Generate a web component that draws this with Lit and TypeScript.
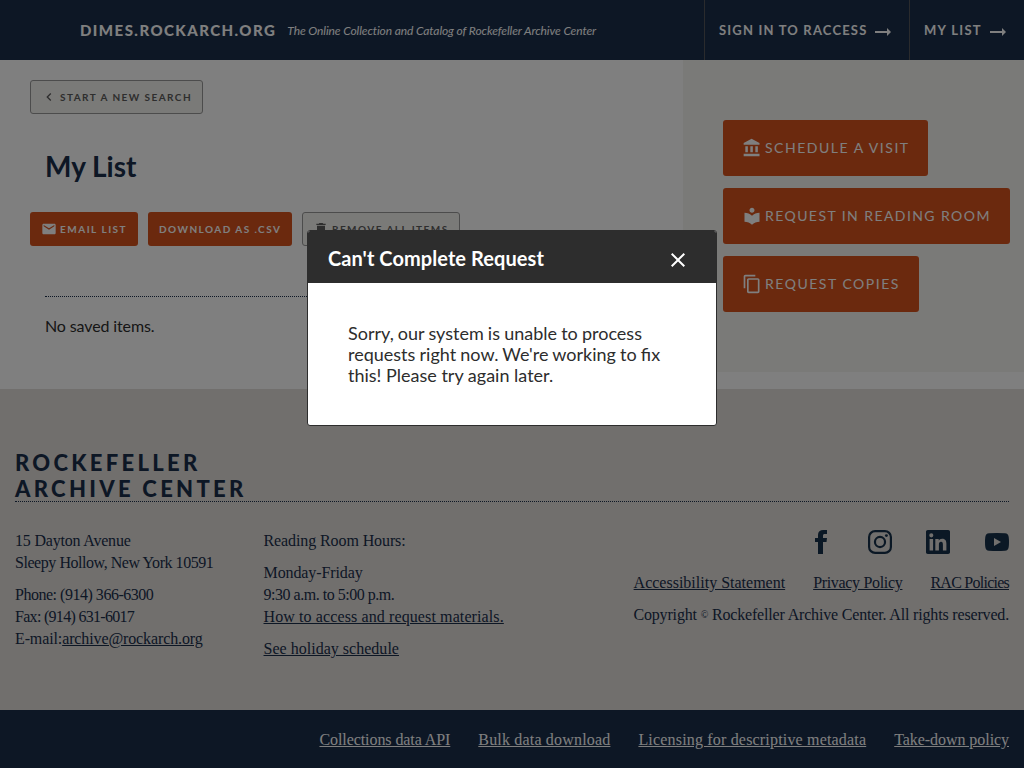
import { LitElement, html, css, svg } from "lit";
import { customElement } from "lit/decorators.js";

const icon = (cls: string, viewBox: string, d: string) =>
  html`<svg class=${cls} viewBox=${viewBox} fill="currentColor" aria-hidden="true">${svg`<path fill-rule="evenodd" d=${d}></path>`}</svg>`;

const ARROW = "M0 4h12V1l4 4-4 4V6H0z";
const CHEVRON = "M15.41 7.41L14 6l-6 6 6 6 1.41-1.41L10.83 12z";
const MAIL = "M20 4H4c-1.1 0-1.99.9-1.99 2L2 18c0 1.1.9 2 2 2h16c1.1 0 2-.9 2-2V6c0-1.1-.9-2-2-2zm0 4l-8 5-8-5V6l8 5 8-5v2z";
const TRASH = "M6 19c0 1.1.9 2 2 2h8c1.1 0 2-.9 2-2V7H6v12zM19 4h-3.500l-1-1h-5l-1 1H5v2h14V4z";
const BANK = "M4 10v7h3v-7H4zm6 0v7h3v-7h-3zM2 22h19v-3H2v3zm14-12v7h3v-7h-3zm-4.500-9L2 6v2h19V6l-9.500-5z";
const READER = "M12 11.550C9.640 9.350 6.480 8 3 8v11c3.480 0 6.640 1.350 9 3.550 2.360-2.190 5.520-3.550 9-3.550V8c-3.480 0-6.640 1.350-9 3.550zM12 8c1.660 0 3-1.340 3-3s-1.340-3-3-3-3 1.340-3 3 1.340 3 3 3z";
const COPY = "M16 1H4c-1.100 0-2 .9-2 2v14h2V3h12V1zm3 4H8c-1.100 0-2 .9-2 2v14c0 1.100.9 2 2 2h11c1.100 0 2-.9 2-2V7c0-1.100-.9-2-2-2zm0 16H8V7h11v14z";
const CLOSE = "M19 6.410L17.590 5 12 10.590 6.410 5 5 6.410 10.590 12 5 17.590 6.410 19 12 13.410 17.590 19 19 17.590 13.410 12z";
const FACEBOOK = "M3 24V12H0V8h3V5C3 1.700 5 0 8.300 0H12v4H9.800C8.500 4 8 4.600 8 5.700V8h4l-.5 4H8v12z";
const LINKEDIN = "M1.800 0h20.400C23.200 0 24 .8 24 1.700v20.600c0 .9-.8 1.700-1.800 1.700H1.800C.8 24 0 23.200 0 22.300V1.700C0 .8.800 0 1.800 0zM3.600 9v11.400h3.500V9zM5.300 3.300a2.050 2.050 0 1 0 0 4.100 2.050 2.050 0 0 0 0-4.100zM9.300 9v11.400h3.600v-5.700c0-1.500.3-2.900 2.100-2.900 1.800 0 1.900 1.700 1.900 3v5.600h3.500v-6.300c0-3.100-.7-5.400-4.300-5.400-1.700 0-2.900.9-3.300 1.800h-.1V9z";
const YOUTUBE = "M4 3.300Q12 2.700 20 3.300Q23.300 3.500 23.700 7Q24.300 12 23.700 17Q23.300 20.500 20 20.700Q12 21.300 4 20.700Q.7 20.500.3 17Q-.3 12 .3 7Q.7 3.500 4 3.300zM9 7.900v8.200l7-4.100z";

@customElement("app-root")
export class AppRoot extends LitElement {
  static styles = css`
    :host { display: block; position: relative; width: 1024px; height: 768px; overflow: hidden; background: #fff; color: #2d2d2d; font-family: Lato, sans-serif; }
    * { box-sizing: border-box; }
    p, h1, h2 { margin: 0; }
    a { color: inherit; }
    svg { display: block; flex: none; }
    .page { display: flex; flex-direction: column; height: 768px; }
    .header { display: flex; height: 60px; flex: none; background: #1a2e4b; color: #fff; white-space: nowrap; }
    .brand { display: flex; align-items: center; flex: 1; padding-left: 80px; gap: 11px; }
    .site { font-size: 15px; font-weight: 900; letter-spacing: 1.45px; line-height: 20px; }
    .tagline { font-size: 12px; font-style: italic; line-height: 20px; padding-top: 2px; letter-spacing: -.095px; }
    .nav { display: flex; align-items: center; gap: 8px; padding: 0 0 0 14px; border-left: 1px solid #55565a; font-size: 13px; font-weight: 700; letter-spacing: 1.3px; }
    .signin { width: 205px; letter-spacing: 1.18px; }
    .mylist { width: 115px; }
    .arrow { width: 16px; height: 10px; margin-top: 4px; }
    .body { display: flex; height: 329px; flex: none; }
    .main { flex: 1; padding: 20px 0 0 30px; }
    .btn { display: inline-flex; align-items: center; height: 34px; border-radius: 3px; font-size: 10px; font-weight: 700; letter-spacing: 1.45px; white-space: nowrap; }
    .light { background: #f5f4f0; border: 1px solid #999; color: #5c5c5c; }
    .orange { background: #d7521d; color: #fff; }
    .back { width: 173px; padding-left: 10px; }
    .title { margin: 33px 0 0 15px; font-size: 28px; line-height: 38px; font-weight: 700; color: #1a2e4b; }
    .actions { display: flex; gap: 10px; margin-top: 27px; }
    .email { width: 108px; padding-left: 11px; letter-spacing: 1.5px; }
    .csv { width: 144px; padding-left: 11px; }
    .remove { width: 158px; padding-left: 10px; }
    .small { width: 16px; height: 16px; margin-right: 3px; }
    .list { margin: 50px 0 0 15px; border-top: 1px dotted #1a2e4b; padding-top: 19px; font-size: 16px; line-height: 20px; letter-spacing: -.12px; }
    .aside { display: flex; flex-direction: column; align-items: flex-start; gap: 12px; width: 341px; height: 312px; padding: 60px 0 0 40px; background: #f5f4f0; }
    .big { display: flex; align-items: center; height: 56px; padding-left: 19px; border-radius: 3px; font-size: 14px; letter-spacing: 1.52px; white-space: nowrap; }
    .label { padding-bottom: 2px; }
    .visit { width: 205px; } .room { width: 287px; letter-spacing: 1.43px; } .copies { width: 196px; }
    .medium { width: 20px; height: 20px; margin-right: 3px; }
    .footer { flex: none; height: 321px; padding: 61px 15px 0; background: #e2dfdb; color: #1a2e4b; }
    .logo { height: 52px; border-bottom: 1px dotted #1a2e4b; font-size: 22px; font-weight: 900; line-height: 26px; letter-spacing: 3.3px; }
    .cols { display: flex; padding-top: 28px; font-family: "Liberation Serif", serif; font-size: 16px; line-height: 22px; white-space: nowrap; }
    .address { width: 248.500px; letter-spacing: -.2px; }
    .city { letter-spacing: -.45px; }
    .phone { letter-spacing: -.48px; }
    .fax { letter-spacing: -.7px; }
    .mail { letter-spacing: -.12px; }
    .hours { width: 300px; letter-spacing: -.1px; }
    .times { letter-spacing: -.48px; }
    .access { letter-spacing: .11px; }
    .holiday { letter-spacing: .02px; }
    .gap { margin-top: 10px; }
    .right { display: flex; flex-direction: column; align-items: flex-end; margin-left: auto; }
    .social { display: flex; align-items: center; height: 24px; color: #16304a; }
    .fb { width: 12px; height: 24px; margin-right: 41px; }
    .ig { width: 24px; height: 24px; margin-right: 34px; }
    .li { width: 24px; height: 24px; margin-right: 35px; }
    .yt { width: 24px; height: 24px; }
    .policies { display: flex; gap: 28px; margin-top: 18px; }
    .p2 { letter-spacing: -.32px; }
    .p3 { letter-spacing: -.75px; }
    .copyright { letter-spacing: -.17px; }
    .mark { font-size: 10px; line-height: 1; vertical-align: 2px; }
    .bottom { display: flex; justify-content: flex-end; gap: 28px; height: 58px; flex: none; padding: 19px 15px 0; background: #1a2e4b; color: #fff; font-family: "Liberation Serif", serif; font-size: 16px; line-height: 22px; white-space: nowrap; }
    .b1 { letter-spacing: -.08px; }
    .b2 { letter-spacing: .18px; }
    .b3 { letter-spacing: .18px; }
    .b4 { letter-spacing: -.06px; }
    .overlay { position: absolute; inset: 0; display: flex; justify-content: center; align-items: flex-start; padding-top: 230px; background: rgba(0,0,0,.5); }
    .modal { width: 410px; height: 196px; border: 1px solid #2d2d2d; border-radius: 3px; background: #fff; overflow: hidden; }
    .modal-head { display: flex; align-items: center; justify-content: space-between; height: 52px; padding: 0 26px 0 20px; background: #2d2d2d; color: #fff; }
    .modal-title { font-size: 20px; font-weight: 700; line-height: 24px; padding-top: 2px; letter-spacing: .07px; }
    .close { width: 24px; height: 24px; margin-top: 6px; }
    .modal-body { padding: 40px; font-size: 18px; line-height: 21px; white-space: nowrap; word-spacing: -.45px; }
    .last { word-spacing: 0; }
  `;

  render() {
    return html`
      <div class="page">
        <header class="header">
          <div class="brand"><span class="site">DIMES.ROCKARCH.ORG</span><span class="tagline">The Online Collection and Catalog of Rockefeller Archive Center</span></div>
          <div class="nav signin"><span>SIGN IN TO RACCESS</span>${icon("arrow", "0 0 16 10", ARROW)}</div>
          <div class="nav mylist"><span>MY LIST</span>${icon("arrow", "0 0 16 10", ARROW)}</div>
        </header>
        <div class="body">
          <main class="main">
            <div class="btn light back">${icon("small", "0 0 24 24", CHEVRON)}START A NEW SEARCH</div>
            <h1 class="title">My List</h1>
            <div class="actions">
              <div class="btn orange email">${icon("small", "0 0 24 24", MAIL)}EMAIL LIST</div>
              <div class="btn orange csv">DOWNLOAD AS .CSV</div>
              <div class="btn light remove">${icon("small", "0 0 24 24", TRASH)}REMOVE ALL ITEMS</div>
            </div>
            <div class="list">No saved items.</div>
          </main>
          <aside class="aside">
            <div class="big orange visit">${icon("medium", "0 0 24 24", BANK)}<span class="label">SCHEDULE A VISIT</span></div>
            <div class="big orange room">${icon("medium", "0 0 24 24", READER)}<span class="label">REQUEST IN READING ROOM</span></div>
            <div class="big orange copies">${icon("medium", "0 0 24 24", COPY)}<span class="label">REQUEST COPIES</span></div>
          </aside>
        </div>
        <footer class="footer">
          <div class="logo">ROCKEFELLER<br>ARCHIVE CENTER</div>
          <div class="cols">
            <div class="address">
              <p>15 Dayton Avenue</p>
              <p class="city">Sleepy Hollow, New York 10591</p>
              <p class="gap phone">Phone: (914) 366-6300</p>
              <p class="fax">Fax: (914) 631-6017</p>
              <p class="mail">E-mail:<a href="#">archive@rockarch.org</a></p>
            </div>
            <div class="hours">
              <p>Reading Room Hours:</p>
              <p class="gap">Monday-Friday</p>
              <p class="times">9:30 a.m. to 5:00 p.m.</p>
              <p class="access"><a href="#">How to access and request materials.</a></p>
              <p class="gap holiday"><a href="#">See holiday schedule</a></p>
            </div>
            <div class="right">
              <div class="social">
                ${icon("fb", "0 0 12 24", FACEBOOK)}
                <svg class="ig" viewBox="0 0 24 24" fill="none" stroke="currentColor" stroke-width="2.200"><rect x="1.100" y="1.100" width="21.800" height="21.800" rx="6"></rect><circle cx="12" cy="12" r="5.050"></circle><circle cx="18.400" cy="5.600" r="1.450" fill="currentColor" stroke="none"></circle></svg>
                ${icon("li", "0 0 24 24", LINKEDIN)}
                ${icon("yt", "0 0 24 24", YOUTUBE)}
              </div>
              <div class="policies"><a class="p1" href="#">Accessibility Statement</a><a class="p2" href="#">Privacy Policy</a><a class="p3" href="#">RAC Policies</a></div>
              <p class="gap copyright">Copyright <span class="mark">©</span> Rockefeller Archive Center. All rights reserved.</p>
            </div>
          </div>
        </footer>
        <div class="bottom"><a class="b1" href="#">Collections data API</a><a class="b2" href="#">Bulk data download</a><a class="b3" href="#">Licensing for descriptive metadata</a><a class="b4" href="#">Take-down policy</a></div>
      </div>
      <div class="overlay">
        <section class="modal">
          <div class="modal-head"><h2 class="modal-title">Can't Complete Request</h2>${icon("close", "0 0 24 24", CLOSE)}</div>
          <p class="modal-body">Sorry, our system is unable to process<br>requests right now. We're working to fix<br><span class="last">this! Please try again later.</span></p>
        </section>
      </div>`;
  }
}
